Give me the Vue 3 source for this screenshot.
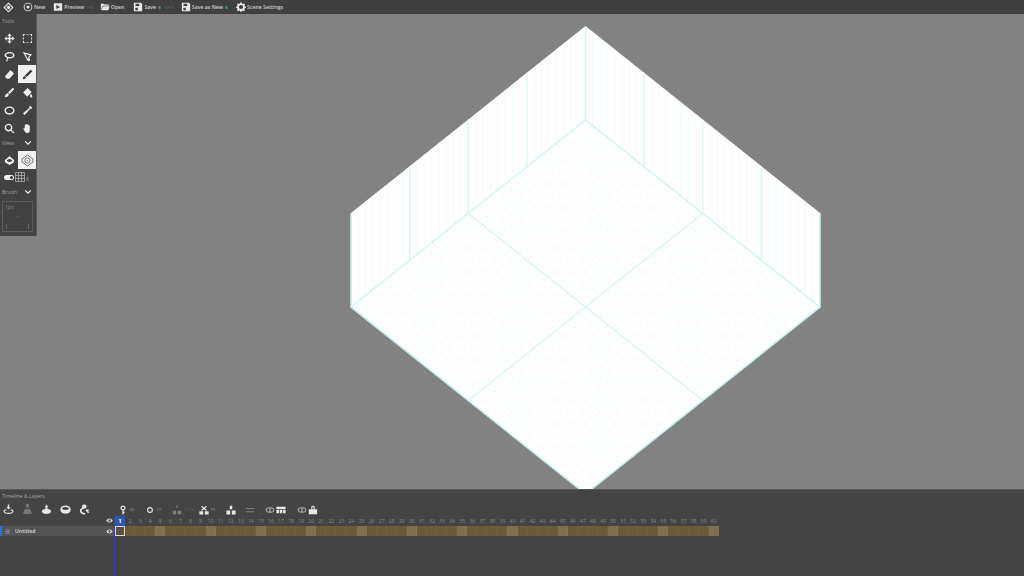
<script setup>
const top = { x: 585.5, y: 12 }
const L = { x: 351, y: 199 }
const R = { x: 820, y: 199 }
const back = { x: 585.5, y: 106 }
const lowL = { x: 351, y: 293 }
const lowR = { x: 820, y: 293 }
const front = { x: 585.5, y: 480 }

const mix = (a, b, t) => ({ x: a.x + (b.x - a.x) * t, y: a.y + (b.y - a.y) * t })
const DIV = 32

const gridLines = (strong) => {
  const out = []
  for (let i = 1; i < DIV; i++) {
    const isStrong = i % 16 === 0
    const t = i / DIV
    if (strong !== isStrong) continue
    // floor
    out.push([mix(back, lowL, t), mix(lowR, front, t)])
    out.push([mix(back, lowR, t), mix(lowL, front, t)])
  }
  for (let i = 1; i < DIV; i++) {
    const t = i / DIV
    if (strong !== (i % 8 === 0)) continue
    // walls
    out.push([mix(L, top, t), mix(lowL, back, t)])
    out.push([mix(R, top, t), mix(lowR, back, t)])
  }
  return out
}
const faint = gridLines(false)
const bold = gridLines(true)
const pts = (...p) => p.map((o) => `${o.x},${o.y}`).join(' ')
const shape = pts(top, R, lowR, front, lowL, L)

const frames = Array.from({ length: 60 }, (_, i) => i + 1)

const tools = [
  'M6 .5 8.500 3H6.900V5.100H9V3.500L11.500 6 9 8.500V6.900H6.900V9H8.500L6 11.500 3.500 9H5.100V6.900H3V8.500L.5 6 3 3.500V5.100H5.100V3H3.500Z',
  'M1 1H3.500V2H2V3.500H1ZM5 1H7V2H5ZM8.500 1H11V3.500H10V2H8.500ZM1 5H2V7H1ZM10 5H11V7H10ZM1 8.500H2V10H3.500V11H1ZM5 10H7V11H5ZM10 8.500H11V11H8.500V10H10Z',
  'M6.500 1C9.200 1 11.500 2.600 11.500 4.700S9.200 8.300 6.500 8.300C5.800 8.300 5 8.200 4.500 8L3.500 11.500 2.300 11.100 3.300 7.500C1.700 6.900.5 5.900.5 4.700.5 2.600 3.800 1 6.500 1ZM6.500 2.500C4.500 2.500 2.200 3.500 2.200 4.700S4.500 6.800 6.500 6.800 9.800 6 9.800 4.700 8.500 2.500 6.500 2.500Z',
  'M1 1 11 3.800 8.200 6.500 8.700 11 6.200 11ZM3.300 3.300 6.900 9.300 7 6 8.600 4.500Z',
  'M7 1 11 5 5.800 10.500H3.200L1 8.300Z',
  'M9.500.7 11.300 2.500 5 8.800 3.200 7ZM2.900 7.700 4.300 9.100 3.500 10.500.7 11.300 1.500 8.700Z',
  'M9.700.8 11.200 2.300 6.200 7.700 4.400 5.900ZM3.900 6.600 5.500 8.200 3.800 10.700 1 11.200 1.400 8.800Z',
  'M6 1 10.500 5.500 5.800 10.500 1.200 6ZM9.700 7.300C10.700 8.700 11.300 9.500 11.300 10.200A1.300 1.300 0 0 1 8.700 10.200C8.700 9.500 9.100 8.700 9.700 7.300Z',
  'M6 1.500C9.200 1.500 11.500 3.500 11.500 6S9.200 10.500 6 10.500 .5 8.500 .5 6 2.800 1.500 6 1.500ZM6 3C3.700 3 2 4.300 2 6S3.700 9 6 9 10 7.700 10 6 8.300 3 6 3Z',
  'M9 .7 11.300 3 9.800 4.500 9.100 3.800 4.700 8.900 2.800 10.900 1.100 9.200 3.100 7.300 8.200 2.900 7.500 2.200Z',
  'M5 .8A4.200 4.200 0 0 1 8.300 7.500L11.400 10.500 10.400 11.500 7.400 8.400A4.200 4.200 0 1 1 5 .8ZM5 2.300A2.700 2.700 0 1 0 5 7.700 2.700 2.700 0 0 0 5 2.300Z',
  'M3 5V2.500C3 1.800 4 1.800 4 2.500V1.800C4 1 5 1 5 1.800 5 1 6.200 1 6.200 1.800V2.200C6.300 1.500 7.300 1.500 7.300 2.300V3C7.500 2.500 8.500 2.500 8.500 3.200V8C8.500 10 7.500 11 6 11 4.500 11 3.800 10.300 3 9L1.500 6.500C1.200 5.700 2.200 5.300 2.800 6Z',
]

const layerIcons = [
  'M5.200 .5H6.800V3.500H8.500L6 6 3.500 3.500H5.200ZM3 5.800 4.200 7H2.300C1.800 7.300 1.800 8.700 2.300 9 4 9.800 8 9.800 9.700 9 10.200 8.700 10.200 7.300 9.700 7H7.800L9 5.800C10.800 6.200 11.500 7.200 11.500 8 11.500 10.300 8 11 6 11S.5 10.300.5 8C.5 7.200 1.200 6.200 3 5.800Z',
  'M4.500 1A1.500 1.500 0 0 1 7.500 1V4H4.500ZM3 5.500H9L10.500 9V11H1.500V9Z',
  'M6 .5 8 3.500H7V5.500C9.500 5.800 11 6.800 11 8.300 11 10 8.500 11 6 11S1 10 1 8.300C1 6.800 2.500 5.800 5 5.500V3.500H4Z',
  'M6 1.500C9 1.500 11.500 3 11.500 5V7C11.500 9 9 10.500 6 10.500S.5 9 .5 7V5C.5 3 3 1.500 6 1.500ZM6 3.200C3.800 3.200 2.200 4 2.200 5S3.800 6.500 6 6.500 9.800 6 9.800 5 8.200 3.200 6 3.200Z',
  'M6 .5A2.300 2.300 0 0 1 6 5.100C4.200 5.100 2.800 5.900 2.800 7.200 2.800 8.700 4.500 9.800 6.500 9.800V11.500C3.500 11.500 1 9.800 1 7.400 1 5.800 2 4.800 3.700 4.200A2.300 2.300 0 0 1 6 .5ZM7.500 6H10.500V7.500H9.600C10.300 8 11 8.500 11 9.500L9.300 9.800C9.300 8.800 8.500 8.300 7.500 8.300Z',
]
</script>

<template>
  <div class="app">
    <header class="menubar">
      <svg class="logo" viewBox="0 0 12 12"><path fill-rule="evenodd" d="M6 .5 11.500 6 6 11.500.5 6ZM6 2.300 2.300 6 6 9.700 9.700 6Z" /><circle cx="6" cy="6" r="1.800" /></svg>
      <div class="menu">
        <svg class="mi" viewBox="0 0 12 12"><path fill-rule="evenodd" d="M6 .8A5.200 5.200 0 1 1 6 11.200 5.200 5.200 0 0 1 6 .8ZM6 1.900A4.100 4.100 0 1 0 6 10.100 4.100 4.100 0 0 0 6 1.900Z" /><circle cx="6" cy="6" r="1.800" /></svg>
        <span>New</span>
      </div>
      <div class="menu wide">
        <svg class="mi" viewBox="0 0 12 12"><path fill-rule="evenodd" d="M1 1.500H11V10.500H1ZM4 3.500V8.500L8.500 6Z" /></svg>
        <span>Preview</span><small>F10</small>
      </div>
      <div class="menu open">
        <svg class="mi" viewBox="0 0 12 12"><path d="M1 2H4.500L5.500 3H10.500V4.500H3L1.500 9.500H1ZM3.500 5H11.500L10 10H2Z" /></svg>
        <span>Open</span>
      </div>
      <div class="menu save">
        <svg class="mi" viewBox="0 0 12 12"><path fill-rule="evenodd" d="M1 1H9.500L11 2.500V11H1ZM3 2V4.800H7.500V2ZM2.800 7V10H5.800V7Z" /></svg>
        <span>Save</span><i class="dot"></i><small>Ctrl S</small>
      </div>
      <div class="menu saveas">
        <svg class="mi" viewBox="0 0 12 12"><path fill-rule="evenodd" d="M1 1H9.500L11 2.500V11H1ZM3 2V4.800H7.500V2ZM2.800 7V10H5.800V7Z" /></svg>
        <span>Save as New</span><i class="dot"></i>
      </div>
      <div class="menu scene">
        <svg class="mi" viewBox="0 0 12 12"><path fill-rule="evenodd" d="M5 .5H7L7.300 2 8.500 2.500 9.800 1.700 11 3 10 4.300 10.500 5.300 11.800 5.500V7.200L10.400 7.500 10 8.500 10.800 9.800 9.500 11 8.300 10.200 7.300 10.600 7 11.800H5L4.700 10.500 3.700 10.100 2.300 11 1 9.700 1.900 8.500 1.500 7.500.2 7.200V5.300L1.500 5 2 4 1.200 2.800 2.500 1.500 3.800 2.300 4.800 1.900ZM6 3.500A2.500 2.500 0 1 0 6 8.500 2.500 2.500 0 0 0 6 3.500Z" /></svg>
        <span>Scene Settings</span>
      </div>
    </header>

    <main class="stage">
      <svg class="board" viewBox="0 0 1024 475" width="1024" height="475">
        <polygon :points="shape" fill="#fff" />
        <line v-for="(l, i) in faint" :key="'f' + i" :x1="l[0].x" :y1="l[0].y" :x2="l[1].x" :y2="l[1].y" stroke="#eefbfb" stroke-width="0.8" />
        <line v-for="(l, i) in bold" :key="'b' + i" :x1="l[0].x" :y1="l[0].y" :x2="l[1].x" :y2="l[1].y" stroke="#d4f6f6" stroke-width="1.300" />
        <polyline :points="pts(lowL, back, lowR)" fill="none" stroke="#cef4f4" stroke-width="1.400" />
        <line :x1="back.x" :y1="back.y" :x2="top.x" :y2="top.y" stroke="#d4f6f6" stroke-width="1.300" />
        <polyline :points="pts(L, lowL, front, lowR, R)" fill="none" stroke="#c2f1f1" stroke-width="1.600" />
      </svg>

      <aside class="toolbox">
        <div class="tb-label">Tools</div>
        <div class="tool-grid">
          <button v-for="(d, i) in tools" :key="i" class="tool" :class="{ on: i === 5 }">
            <svg viewBox="0 0 12 12"><path :d="d" fill-rule="evenodd" /></svg>
          </button>
        </div>
        <div class="tb-head view-head"><span>View</span><svg viewBox="0 0 10 10"><path d="M1.500 3 5 6.500 8.500 3" /></svg></div>
        <div class="tool-grid">
          <button class="tool">
            <svg viewBox="0 0 12 12"><path fill-rule="evenodd" d="M6 1 8 3 11 5.500V8L6 11 1 8V5.500L4 3ZM6 4.300C4.700 4.300 3.600 5.100 3 6 3.600 6.900 4.700 7.700 6 7.700S8.400 6.900 9 6C8.400 5.100 7.300 4.300 6 4.300Z" /></svg>
          </button>
          <button class="tool on">
            <svg class="outline" viewBox="0 0 12 12"><path d="M6 1 11 4.500V7.500L6 11 1 7.500V4.500Z" /><circle cx="6" cy="6" r="2.400" /><path d="M6 5.500V6.500" /></svg>
          </button>
        </div>
        <div class="view-row">
          <span class="toggle"></span>
          <svg class="grid-ic" viewBox="0 0 10 10"><path d="M.5.500H9.500V9.500H.5ZM3.500.500V9.500M6.500.500V9.500M.5 3.500H9.500M.5 6.500H9.500" /></svg>
          <small>6</small>
        </div>
        <div class="tb-head"><span>Brush</span><svg viewBox="0 0 10 10"><path d="M1.500 3 5 6.500 8.500 3" /></svg></div>
        <div class="brush"><span>1px</span><b>·</b></div>
      </aside>
    </main>

    <section class="timeline">
      <div class="tl-title">Timeline &amp; Layers</div>
      <div class="tl-tools">
        <div class="layer-tools">
          <svg v-for="(d, i) in layerIcons" :key="i" :class="{ dim: i === 1 }" viewBox="0 0 12 12">
            <path :d="d" fill-rule="evenodd" />
          </svg>
        </div>
        <div class="frame-tools">
          <div class="ft" style="width: 27px">
            <svg viewBox="0 0 12 12"><path fill-rule="evenodd" d="M6 .5A3 3 0 0 1 6.800 6.400V8H8.300V9.300H6.800V11.500H5.200V6.400A3 3 0 0 1 6 .5ZM6 2A1.500 1.500 0 1 0 6 5 1.500 1.500 0 0 0 6 2Z" /></svg><small>F6</small>
          </div>
          <div class="ft" style="width: 27px">
            <svg viewBox="0 0 12 12"><path fill-rule="evenodd" d="M6 2.500A3.500 3.500 0 1 1 6 9.500 3.500 3.500 0 0 1 6 2.500ZM6 3.800A2.200 2.200 0 1 0 6 8.200 2.200 2.200 0 0 0 6 3.800Z" /></svg><small>F7</small>
          </div>
          <div class="ft dim" style="width: 27px">
            <svg viewBox="0 0 12 12"><path d="M5 1H7V3H5ZM1 7H5V11H1ZM7 7H11V11H7Z" /></svg><small>F5 F5</small>
          </div>
          <div class="ft" style="width: 27px">
            <svg viewBox="0 0 12 12"><path d="M3.500 1 6 3 8.500 1 9.500 2 7 4 9.500 6 8.500 7 6 5 3.500 7 2.500 6 5 4 2.500 2ZM.5 7.500H5V11.500H.5ZM7 7.500H11.500V11.500H7Z" /></svg><small>F5</small>
          </div>
          <div class="ft" style="width: 19px">
            <svg viewBox="0 0 12 12"><path d="M4.500 1H7.500V5H4.500ZM.5 6.500H5V11.500H.5ZM7 6.500H11.500V11.500H7Z" /></svg>
          </div>
          <div class="ft dim" style="width: 20px">
            <svg viewBox="0 0 12 12"><path d="M1 3.500H11V4.700H1ZM1 7.500H11V8.700H1Z" /></svg>
          </div>
          <div class="ft pair" style="width: 32px">
            <svg viewBox="0 0 12 12"><path class="link" d="M4 3.500H8A2.500 2.500 0 0 1 8 8.500H4A2.500 2.500 0 0 1 4 3.500ZM6 3.500V8.500" /></svg>
            <svg viewBox="0 0 12 12"><path d="M.5 2H11.500V5H.5ZM.5 6H3.500V10H.5ZM4.500 6H7.500V10H4.500ZM8.500 6H11.500V10H8.500Z" /></svg>
          </div>
          <div class="ft pair" style="width: 32px">
            <svg viewBox="0 0 12 12"><path class="link" d="M4 3.500H8A2.500 2.500 0 0 1 8 8.500H4A2.500 2.500 0 0 1 4 3.500ZM6 3.500V8.500" /></svg>
            <svg viewBox="0 0 12 12"><path fill-rule="evenodd" d="M4 2.500C4 .5 8 .5 8 2.500V5H11V11H1V5H4ZM5.200 2.800V5H6.800V2.800C6.800 2 5.200 2 5.200 2.800Z" /></svg>
          </div>
        </div>
      </div>

      <div class="tracks">
        <div class="numbers">
          <div class="corner">
            <svg class="eye" viewBox="0 0 12 12"><path fill-rule="evenodd" d="M6 2.500C8.500 2.500 10.500 4.500 11.500 6 10.500 7.500 8.500 9.500 6 9.500S1.500 7.500.5 6C1.500 4.500 3.500 2.500 6 2.500ZM6 4A2 2 0 1 0 6 8 2 2 0 0 0 6 4Z" /></svg>
          </div>
          <div class="ruler">
            <span v-for="f in frames" :key="f" :class="{ now: f === 1 }">{{ f }}</span>
          </div>
        </div>
        <div class="layer">
          <div class="layer-head">
            <i class="layer-mark"></i>
            <svg class="handle" viewBox="0 0 6 6"><path d="M.5 1H5.500M.5 3H5.500M.5 5H5.500" /></svg>
            <span class="layer-name">Untitled</span>
            <svg class="eye" viewBox="0 0 12 12"><path fill-rule="evenodd" d="M6 2.500C8.500 2.500 10.500 4.500 11.500 6 10.500 7.500 8.500 9.500 6 9.500S1.500 7.500.5 6C1.500 4.500 3.500 2.500 6 2.500ZM6 4A2 2 0 1 0 6 8 2 2 0 0 0 6 4Z" /></svg>
          </div>
          <div class="cells">
            <span v-for="f in frames" :key="f" :class="{ first: f === 1, fifth: f % 5 === 0 }"></span>
          </div>
        </div>
        <i class="playhead"></i>
      </div>
    </section>
  </div>
</template>

<style>
html, body {
  margin: 0;
  background: #444;
  overflow: hidden;
}
</style>

<style scoped>
.app {
  width: 1024px;
  height: 576px;
  display: flex;
  flex-direction: column;
  font-family: "Open Sans", "Liberation Sans", sans-serif;
  color: #d0d0d0;
  font-size: 5.200px;
  overflow: hidden;
}
.menubar {
  height: 14px;
  flex: none;
  background: #404040;
  display: flex;
  align-items: center;
  position: relative;
}
.menubar svg { fill: #e8e8e8; }
.logo { width: 11px; height: 11px; margin-left: 3px; margin-right: 9px; flex: none; }
.menu { display: flex; align-items: center; gap: 1px; white-space: nowrap; font-weight: 600; }
.menu small { font-size: 4px; color: #777; margin-left: 2px; font-weight: 400; }
.mi { width: 10px; height: 10px; flex: none; }
.wide { margin-left: 8px; }
.open { margin-left: 6px; }
.save { margin-left: 9px; }
.saveas { margin-left: 7px; }
.scene { margin-left: 8px; }
.dot { width: 3px; height: 3px; border-radius: 50%; background: #3f8f68; margin-left: 1px; }
.stage {
  flex: 1;
  position: relative;
  background: #828282;
  overflow: hidden;
}
.board { position: absolute; left: 0; top: 0; display: block; }
.toolbox {
  position: absolute;
  left: 0;
  top: 0;
  width: 36px;
  height: 222px;
  background: #424242;
  box-sizing: border-box;
  padding-top: 3px;
  box-shadow: 1px 0 0 #5a5a5a;
}
.tb-label { font-size: 5px; color: #9a9a9a; padding-left: 2px; height: 12px; line-height: 8px; }
.tool-grid { display: grid; grid-template-columns: 18px 18px; grid-auto-rows: 18px; }
.tool {
  width: 18px;
  height: 18px;
  padding: 0;
  border: 0;
  background: transparent;
  display: flex;
  align-items: center;
  justify-content: center;
}
.tool svg { width: 11px; height: 11px; fill: #eee; }
.tool.on { background: #f0f0f0; }
.tool.on svg { fill: #333; }
.tool svg.outline { fill: none; stroke: #666; stroke-width: 0.8; width: 13px; height: 13px; }
.tb-head {
  height: 14px;
  display: flex;
  align-items: center;
  justify-content: space-between;
  font-size: 5.500px;
  color: #a0a0a0;
  padding: 0 4px 0 2px;
}
.view-head { padding-bottom: 2px; box-sizing: border-box; }
.tb-head svg { width: 8px; height: 8px; fill: none; stroke: #eee; stroke-width: 1.600; }
.view-row { height: 16px; display: flex; align-items: center; padding-left: 4px; gap: 1px; }
.toggle {
  width: 10px;
  height: 5px;
  border-radius: 3px;
  background: #eee;
  position: relative;
}
.toggle::after {
  content: "";
  position: absolute;
  right: 1px;
  top: 1px;
  width: 3px;
  height: 3px;
  border-radius: 50%;
  background: #333;
}
.grid-ic { width: 10px; height: 10px; fill: none; stroke: #bbb; stroke-width: 0.700; }
.view-row small { font-size: 5px; margin-top: 3px; color: #aaa; }
.brush {
  margin: 2px 0 0 2px;
  width: 31px;
  height: 31px;
  box-sizing: border-box;
  border: 1px solid #5c5c5c;
  position: relative;
  color: #888;
}
.brush::before,
.brush::after {
  content: "";
  position: absolute;
  bottom: 2px;
  width: 1px;
  height: 5px;
  background: #6a6a6a;
}
.brush::before { left: 3px; }
.brush::after { right: 3px; }
.brush span { position: absolute; left: 2px; top: 2px; font-size: 5px; }
.brush b { position: absolute; left: 14px; top: 10px; font-size: 6px; }
.timeline {
  height: 87px;
  flex: none;
  background: #444;
  border-top: 1px solid #585858;
  box-sizing: border-box;
  display: flex;
  flex-direction: column;
}
.tl-title { font-size: 5.200px; color: #a8a8a8; height: 11px; line-height: 12px; padding-left: 2px; }
.tl-tools { height: 15px; display: flex; align-items: center; padding-top: 2px; box-sizing: border-box; }
.layer-tools { width: 114px; display: flex; gap: 8px; padding-left: 3px; box-sizing: border-box; }
.layer-tools svg { width: 11px; height: 11px; fill: #e8e8e8; flex: none; }
.layer-tools .dim { opacity: 0.3; }
.frame-tools { display: flex; align-items: center; padding-left: 4px; }
.ft { display: flex; align-items: center; flex: none; }
.ft svg { width: 10px; height: 10px; fill: #e8e8e8; flex: none; }
.ft small { font-size: 4px; color: #999; margin-left: 2px; white-space: nowrap; }
.ft.dim { opacity: 0.35; }
.ft .link { fill: none; stroke: #ddd; stroke-width: 0.900; }
.pair { gap: 1px; }
.tracks { flex: 1; position: relative; }
.numbers { display: flex; height: 10px; }
.corner { width: 114px; position: relative; flex: none; }
.eye { width: 7px; height: 7px; fill: #ddd; flex: none; }
.corner .eye { position: absolute; right: 1px; top: 1px; }
.ruler { display: flex; width: 604px; margin-left: 1px; }
.ruler span {
  flex: 1 1 0;
  min-width: 0;
  text-align: center;
  font-size: 5px;
  line-height: 10px;
  color: #888;
  white-space: nowrap;
}
.ruler .now { background: #2a55b0; color: #fff; font-weight: 700; font-size: 6px; }
.layer { display: flex; height: 10px; }
.layer-head {
  width: 114px;
  flex: none;
  background: #545454;
  display: flex;
  align-items: center;
  box-sizing: border-box;
}
.layer-mark { width: 2px; height: 10px; background: #2f6fe0; flex: none; }
.handle { width: 5px; height: 5px; fill: none; stroke: #aaa; stroke-width: 0.800; margin-left: 3px; flex: none; }
.layer-name { margin-left: 5px; font-weight: 600; color: #ddd; flex: 1; }
.layer-head .eye { margin-right: 1px; }
.cells { display: flex; width: 604px; margin-left: 1px; background: #6a5a3a; }
.cells span { flex: 1 1 0; min-width: 0; box-shadow: inset -1px 0 0 rgba(255, 255, 255, 0.03); }
.cells .fifth { background: #7f7052; }
.cells .first { box-shadow: inset 0 0 0 1px #e0dcc8; background: #5a5240; }
.playhead {
  position: absolute;
  left: 114px;
  top: 0;
  bottom: 0;
  width: 1px;
  background: #2c4f90;
}
</style>
